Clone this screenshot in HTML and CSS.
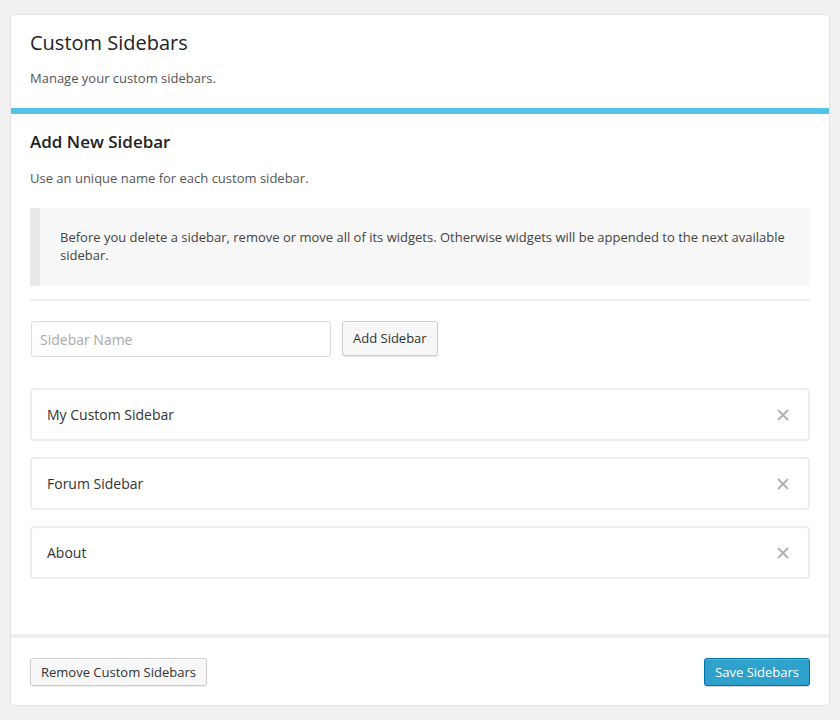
FILE: index.html
```html
<!DOCTYPE html>
<html>
<head>
<meta charset="utf-8">
<link rel="stylesheet" href="styles.css">
</head>
<body>
<div class="card">
  <div class="header">
    <h1 class="title">Custom Sidebars</h1>
    <p class="subtitle">Manage your custom sidebars.</p>
  </div>
  <div class="main">
    <h2 class="section-title">Add New Sidebar</h2>
    <p class="desc">Use an unique name for each custom sidebar.</p>
    <div class="notice">
      <p>Before you delete a sidebar, remove or move all of its widgets. Otherwise widgets will be appended to the next available sidebar.</p>
    </div>
    <hr class="sep">
    <div class="add-row">
      <input class="name-input" type="text" placeholder="Sidebar Name">
      <button class="btn btn-add">Add Sidebar</button>
    </div>
    <ul class="list">
      <li class="item"><span>My Custom Sidebar</span><svg class="remove" width="14" height="14" viewBox="0 0 14 14"><path d="M2 2L12 12M12 2L2 12" stroke="#b3b3b3" stroke-width="2" fill="none"/></svg></li>
      <li class="item"><span>Forum Sidebar</span><svg class="remove" width="14" height="14" viewBox="0 0 14 14"><path d="M2 2L12 12M12 2L2 12" stroke="#b3b3b3" stroke-width="2" fill="none"/></svg></li>
      <li class="item"><span>About</span><svg class="remove" width="14" height="14" viewBox="0 0 14 14"><path d="M2 2L12 12M12 2L2 12" stroke="#b3b3b3" stroke-width="2" fill="none"/></svg></li>
    </ul>
  </div>
  <div class="footer">
    <button class="btn btn-small">Remove Custom Sidebars</button>
    <button class="btn btn-primary">Save Sidebars</button>
  </div>
</div>
</body>
</html>
```
FILE: styles.css
```css
* { box-sizing: border-box; }
html, body { margin: 0; padding: 0; }
body {
  background: #f1f1f1;
  font-family: "Open Sans", "Liberation Sans", sans-serif;
  color: #444;
  padding: 14px 10px;
}
.card {
  width: 820px;
  background: #fff;
  border: 1px solid #e1e1e1;
  border-radius: 4px;
}
.header {
  padding: 14px 19px 20px;
}
.title {
  margin: 0;
  font-size: 20px;
  line-height: 28px;
  font-weight: 400;
  color: #222;
}
.subtitle {
  margin: 11px 0 0;
  font-size: 13px;
  line-height: 20px;
  color: #555;
}
.main {
  border-top: 6px solid #54c4e8;
  padding: 16px 19px 55px;
}
.section-title {
  margin: 0;
  font-size: 17px;
  line-height: 24px;
  font-weight: 600;
  color: #222;
}
.desc {
  margin: 14px 0 0;
  font-size: 13px;
  line-height: 20px;
  color: #555;
}
.notice {
  margin-top: 20px;
  background: #f7f7f7;
  border-left: 10px solid #e9e9e9;
  padding: 20px 20px 22px;
}
.notice p {
  margin: 0;
  font-size: 13px;
  line-height: 18px;
  color: #444;
}
.sep {
  margin: 13px 0 0;
  border: 0;
  height: 2px;
  background: #eee;
}
.add-row {
  margin-top: 20px;
  display: flex;
  align-items: flex-start;
  gap: 11px;
}
.name-input {
  margin-left: 1px;
  width: 300px;
  height: 36px;
  border: 1px solid #ddd;
  border-radius: 3px;
  box-shadow: inset 0 1px 2px rgba(0,0,0,.04);
  padding: 0 8px;
  font-family: inherit;
  font-size: 14px;
  color: #333;
}
.name-input::placeholder { color: #a9a9a9; }
.btn {
  font-family: inherit;
  font-size: 13px;
  color: #333;
  background: #f7f7f7;
  border: 1px solid #ccc;
  border-radius: 3px;
  box-shadow: inset 0 1px 0 #fff, 0 1px 0 rgba(0,0,0,.08);
  padding: 0 10px;
  height: 28px;
  line-height: 26px;
  cursor: pointer;
}
.btn-add {
  height: 35px;
  line-height: 33px;
}
.list {
  list-style: none;
  margin: 31px 0 0;
  padding: 0;
  display: flex;
  flex-direction: column;
  gap: 16px;
}
.item {
  height: 53px;
  border: 2px solid #eee;
  border-radius: 4px;
  display: flex;
  align-items: center;
  justify-content: space-between;
  padding: 0 18px 0 15px;
  font-size: 14px;
  color: #333;
}
.remove { display: block; }
.footer {
  border-top: 4px solid #eee;
  padding: 20px 19px 19px 19px;
  display: flex;
  justify-content: space-between;
  align-items: center;
}
.btn-primary {
  background: #2ea2cc;
  border-color: #0074a2;
  color: #fff;
  font-weight: 400;
  box-shadow: inset 0 1px 0 rgba(120,200,230,.5), 0 1px 0 rgba(0,0,0,.15);
}
```
